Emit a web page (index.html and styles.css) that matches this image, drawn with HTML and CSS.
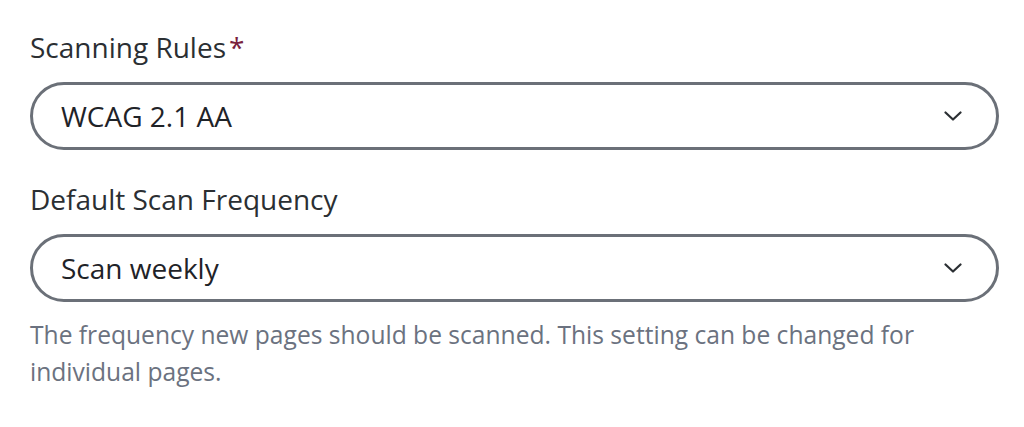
FILE: index.html
```html
<!DOCTYPE html>
<html lang="en">
<head>
<meta charset="utf-8">
<link rel="stylesheet" href="styles.css">
</head>
<body>
<div class="form">
  <div class="field">
    <div class="label">Scanning Rules<span class="req">*</span></div>
    <div class="select">
      <span class="value">WCAG 2.1 AA</span>
      <svg class="chev" width="18" height="10" viewBox="0 0 18 10"><path d="M1.5 1.5 L9 8.5 L16.5 1.5" fill="none" stroke="#2b2f33" stroke-width="2.2" stroke-linecap="round" stroke-linejoin="round"/></svg>
    </div>
  </div>
  <div class="field second">
    <div class="label">Default Scan Frequency</div>
    <div class="select">
      <span class="value">Scan weekly</span>
      <svg class="chev" width="18" height="10" viewBox="0 0 18 10"><path d="M1.5 1.5 L9 8.5 L16.5 1.5" fill="none" stroke="#2b2f33" stroke-width="2.2" stroke-linecap="round" stroke-linejoin="round"/></svg>
    </div>
    <p class="help">The frequency new pages should be scanned. This setting can be changed for individual pages.</p>
  </div>
</div>
</body>
</html>
```
FILE: styles.css
```css
html, body {
  margin: 0;
  padding: 0;
  background: #ffffff;
}
body {
  font-family: "Open Sans", "Noto Sans", sans-serif;
  color: #2b2f33;
}
.form {
  padding: 27px 25px 0 30px;
  display: flex;
  flex-direction: column;
}
.field {
  display: flex;
  flex-direction: column;
}
.field.second {
  margin-top: 29px;
}
.label {
  font-size: 28px;
  line-height: 40px;
  margin-bottom: 15px;
  color: #2b2f33;
}
.req {
  color: #7a1f3d;
  margin-left: 3px;
}
.select {
  box-sizing: border-box;
  height: 68px;
  border: 3px solid #6b7078;
  border-radius: 34px;
  display: flex;
  align-items: center;
  justify-content: space-between;
  padding: 0 34px 0 28px;
}
.value {
  font-size: 28px;
  line-height: 40px;
  color: #1f2328;
}
.chev {
  display: block;
}
.help {
  margin: 14px 0 0 0;
  font-size: 24.6px;
  line-height: 37px;
  color: #6b7280;
  max-width: 930px;
}
```
